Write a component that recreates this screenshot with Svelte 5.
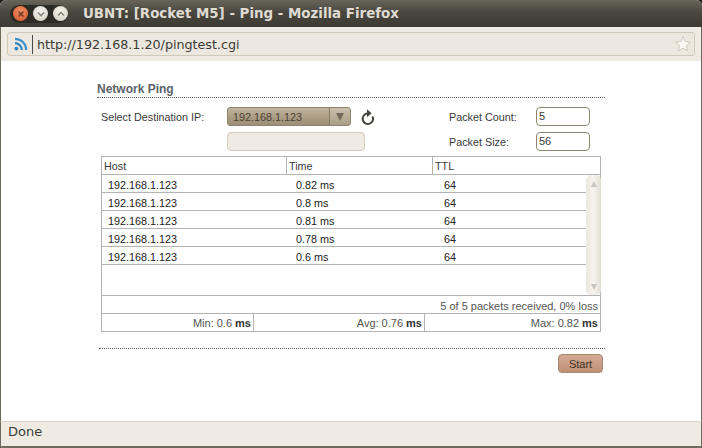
<script lang="ts">
  const rows = [
    { host: '192.168.1.123', time: '0.82 ms', ttl: 64 },
    { host: '192.168.1.123', time: '0.8 ms', ttl: 64 },
    { host: '192.168.1.123', time: '0.81 ms', ttl: 64 },
    { host: '192.168.1.123', time: '0.78 ms', ttl: 64 },
    { host: '192.168.1.123', time: '0.6 ms', ttl: 64 }
  ]
</script>

<div class="window">
  <header class="titlebar">
    <div class="controls">
      <span class="wbtn close">
        <svg width="8" height="8" viewBox="0 0 8 8"><path d="M1.500 1.500l5 5M6.500 1.500l-5 5" stroke="#6a3a22" stroke-width="1.500" fill="none"/></svg>
      </span>
      <span class="wbtn">
        <svg width="10" height="8" viewBox="0 0 10 8"><path d="M2 2.500l3 3 3-3" stroke="#8a867c" stroke-width="1.600" fill="none"/></svg>
      </span>
      <span class="wbtn">
        <svg width="10" height="8" viewBox="0 0 10 8"><path d="M2 5.500l3-3 3 3" stroke="#8a867c" stroke-width="1.600" fill="none"/></svg>
      </span>
    </div>
    <div class="title">UBNT: [Rocket M5] - Ping - Mozilla Firefox</div>
  </header>

  <nav class="navbar">
    <div class="urlbar">
      <svg class="feed" width="14" height="14" viewBox="0 0 14 14">
        <circle cx="2.400" cy="11.600" r="1.900" fill="#2f86c0"/>
        <path d="M1 6.200a6.800 6.800 0 0 1 6.800 6.800" stroke="#2f86c0" stroke-width="2.200" fill="none"/>
        <path d="M1 1.800a11.200 11.200 0 0 1 11.200 11.200" stroke="#3d92cc" stroke-width="2.200" fill="none"/>
      </svg>
      <span class="sep"></span>
      <span class="url">http://192.168.1.20/pingtest.cgi</span>
      <svg class="star" width="18" height="18" viewBox="0 0 18 18">
        <path d="M9 1.800l2.200 4.700 5.100.6-3.800 3.500 1 5.100L9 13.200l-4.500 2.500 1-5.100L1.700 7.100l5.100-.6z" fill="#fbfaf7" stroke="#cfc9bc" stroke-width="1"/>
      </svg>
    </div>
  </nav>

  <main class="content">
    <section class="panel">
      <h1>Network Ping</h1>

      <div class="form">
        <div class="left">
          <div class="line">
            <label for="dest">Select Destination IP:</label>
            <div class="select" id="dest">
              <span class="value">192.168.1.123</span>
              <span class="arrow"></span>
            </div>
            <svg class="reload" width="16" height="18" viewBox="0 0 16 18">
              <path d="M12.500 8.400A5.200 5.200 0 1 1 7.300 5.600" stroke="#44443f" stroke-width="2" fill="none"/>
              <path d="M7 1.200v8l4.600-4z" fill="#44443f"/>
            </svg>
          </div>
          <div class="line second">
            <span class="status-box"></span>
          </div>
        </div>
        <div class="right">
          <div class="line">
            <label for="count">Packet Count:</label>
            <span class="field" id="count">5</span>
          </div>
          <div class="line second">
            <label for="size">Packet Size:</label>
            <span class="field" id="size">56</span>
          </div>
        </div>
      </div>

      <div class="table">
        <div class="head">
          <span>Host</span>
          <span>Time</span>
          <span>TTL</span>
        </div>
        <div class="scroller">
          <div class="body">
            {#each rows as row}
              <div class="row">
                <span>{row.host}</span>
                <span>{row.time}</span>
                <span>{row.ttl}</span>
              </div>
            {/each}
          </div>
          <div class="scrollbar">
            <span class="up"></span>
            <span class="down"></span>
          </div>
        </div>
        <div class="summary">5 of 5 packets received, 0% loss</div>
        <div class="stats">
          <span>Min: 0.6 <b>ms</b></span>
          <span>Avg: 0.76 <b>ms</b></span>
          <span>Max: 0.82 <b>ms</b></span>
        </div>
      </div>

      <div class="actions">
        <button type="button">Start</button>
      </div>
    </section>
  </main>

  <footer class="statusbar">Done</footer>
</div>

<style>
  :global(body) {
    background: #1e1d19;
  }
  .window {
    width: 702px;
    height: 448px;
    display: flex;
    flex-direction: column;
    box-sizing: border-box;
    border-radius: 6px 6px 3px 3px;
    overflow: hidden;
    background: #f0ebe2;
    font-family: "Liberation Sans", Arial, sans-serif;
  }
  .titlebar {
    height: 27px;
    flex: none;
    display: flex;
    align-items: center;
    padding-left: 10px;
    background: linear-gradient(#68645a, #4a473f 45%, #3c3a33);
  }
  .controls {
    width: 58px;
    height: 18px;
    box-sizing: border-box;
    padding-left: 3px;
    display: flex;
    align-items: center;
    gap: 5px;
    border-radius: 9px;
    background: #2d2b26;
  }
  .wbtn {
    width: 15px;
    height: 15px;
    border-radius: 50%;
    display: flex;
    align-items: center;
    justify-content: center;
    background: radial-gradient(circle at 50% 35%, #f6f3ec, #d0ccc0);
  }
  .wbtn.close {
    background: radial-gradient(circle at 50% 35%, #f08f62, #d2562c);
  }
  .title {
    margin-left: 15px;
    font: bold 13.4px "DejaVu Sans", sans-serif;
    color: #dfdbd2;
    white-space: nowrap;
  }
  .navbar {
    height: 34px;
    flex: none;
    box-sizing: border-box;
    padding: 5px 6px 0 7px;
    background: #f0ebe2;
    border-left: 1px solid #6f6a5c;
    border-right: 1px solid #6f6a5c;
  }
  .urlbar {
    height: 24px;
    box-sizing: border-box;
    display: flex;
    align-items: center;
    border: 1px solid #cfc9ba;
    border-radius: 3px;
    background: #ece8df;
    margin-left: -1px;
    padding-left: 6px;
    padding-right: 2px;
  }
  .sep {
    width: 1px;
    height: 19px;
    margin: 0 4px 0 4px;
    background: #4c4a44;
  }
  .url {
    flex: 1;
    font: 12.7px "DejaVu Sans", sans-serif;
    color: #3c3b37;
    white-space: nowrap;
  }
  .content {
    flex: 1;
    min-height: 0;
    background: #fff;
    border-left: 1px solid #6f6a5c;
    border-right: 1px solid #6f6a5c;
    padding: 20px 0 0 96px;
  }
  .panel {
    width: 508px;
    font-size: 10.8px;
    color: #3a3a3a;
  }
  h1 {
    margin: 0;
    height: 16px;
    line-height: 17px;
    font-size: 12px;
    font-weight: bold;
    color: #5b6368;
    border-bottom: 1px dotted #55584f;
    box-sizing: content-box;
  }
  .form {
    display: flex;
    justify-content: space-between;
    margin-top: 9px;
    padding: 0 15px 0 4px;
  }
  .line {
    display: flex;
    align-items: center;
    height: 19px;
  }
  .line.second {
    margin-top: 6px;
  }
  .left label {
    width: 126px;
  }
  .right label {
    width: 87px;
  }
  .select {
    width: 124px;
    height: 19px;
    box-sizing: border-box;
    display: flex;
    align-items: center;
    justify-content: space-between;
    padding-left: 5px;
    border-radius: 3px;
    border: 1px solid #8f8470;
    color: #4a4132;
    background: linear-gradient(#c2b59e, #a99b82 60%, #9d8f76);
  }
  .arrow {
    width: 21px;
    height: 17px;
    box-sizing: border-box;
    border-left: 1px solid #86795f;
    background: linear-gradient(#c9bfac, #ab9e87);
    border-radius: 0 3px 3px 0;
    position: relative;
  }
  .arrow::after {
    content: '';
    position: absolute;
    left: 6px;
    top: 5px;
    border-left: 4px solid transparent;
    border-right: 4px solid transparent;
    border-top: 8px solid #736c5c;
  }
  .reload {
    margin-left: 9px;
  }
  .status-box {
    display: block;
    margin-left: 126px;
    width: 138px;
    height: 19px;
    box-sizing: border-box;
    border: 1px solid #d3cbbb;
    border-radius: 4px;
    background: #f0ebe2;
  }
  .field {
    display: block;
    width: 54px;
    height: 19px;
    box-sizing: border-box;
    padding-left: 2px;
    line-height: 17px;
    font-size: 11px;
    border: 1px solid #8e8672;
    border-radius: 4px;
    background: #fff;
  }
  .table {
    margin: 5px 0 0 4px;
    width: 500px;
    box-sizing: border-box;
    border: 1px solid #b4b4b4;
  }
  .head {
    height: 18px;
    display: grid;
    grid-template-columns: 184px 146px 1fr;
    border-bottom: 1px solid #b4b4b4;
    box-sizing: border-box;
  }
  .head span {
    padding: 1px 0 0 2px;
    line-height: 17px;
    height: 17px;
    box-sizing: border-box;
    border-left: 1px solid #b4b4b4;
  }
  .head span:first-child {
    border-left: none;
  }
  .scroller {
    height: 121px;
    display: flex;
    border-bottom: 1px solid #b4b4b4;
    box-sizing: border-box;
  }
  .body {
    flex: 1;
  }
  .row {
    height: 18px;
    box-sizing: border-box;
    display: grid;
    grid-template-columns: 188px 148px 1fr;
    grid-template-rows: 17px;
    line-height: 21px;
    padding-left: 6px;
    border-bottom: 1px solid #b4b4b4;
    color: #222;
  }
  .scrollbar {
    width: 15px;
    margin-right: -1px;
    box-sizing: border-box;
    display: flex;
    flex-direction: column;
    justify-content: space-between;
    align-items: center;
    padding: 6px 0 5px;
    border-radius: 5px;
    background: linear-gradient(90deg, #ece8df, #f6f3ee 50%, #e3dfd4);
  }
  .up, .down {
    display: block;
    border-left: 3px solid transparent;
    border-right: 3px solid transparent;
  }
  .up {
    border-bottom: 6px solid #c9c5ba;
  }
  .down {
    border-top: 6px solid #c9c5ba;
  }
  .summary {
    height: 18px;
    padding: 2px 2px 0 0;
    line-height: 16px;
    font-size: 11px;
    box-sizing: border-box;
    text-align: right;
    color: #555;
    border-bottom: 1px solid #b4b4b4;
  }
  .stats {
    height: 17px;
    display: grid;
    grid-template-columns: 151px 171px 1fr;
    font-size: 11px;
    color: #555;
  }
  .stats span {
    height: 17px;
    box-sizing: border-box;
    padding: 2px 2px 0 0;
    line-height: 15px;
    text-align: right;
    border-left: 1px solid #b4b4b4;
  }
  .stats span:first-child {
    border-left: none;
  }
  .stats b {
    color: #333;
  }
  .actions {
    margin-top: 16px;
    padding-top: 5px;
    border-top: 1px dotted #55584f;
    display: flex;
    justify-content: flex-end;
    margin-left: 2px;
  }
  button {
    width: 45px;
    height: 19px;
    padding: 0;
    margin-right: 2px;
    font: 11px "Liberation Sans", Arial, sans-serif;
    color: #3d3020;
    border: 1px solid #a58a74;
    border-radius: 4px;
    background: linear-gradient(#d3ac96, #bf8f76);
  }
  .statusbar {
    height: 27px;
    flex: none;
    box-sizing: border-box;
    padding-left: 7px;
    font: 13px/19px "DejaVu Sans", sans-serif;
    color: #3c3b37;
    background: #f0ebe2;
    border-top: 1px solid #dcd6ca;
    border-left: 1px solid #6f6a5c;
    border-right: 1px solid #6f6a5c;
    border-bottom: 2px solid #6f6a5c;
  }
</style>
